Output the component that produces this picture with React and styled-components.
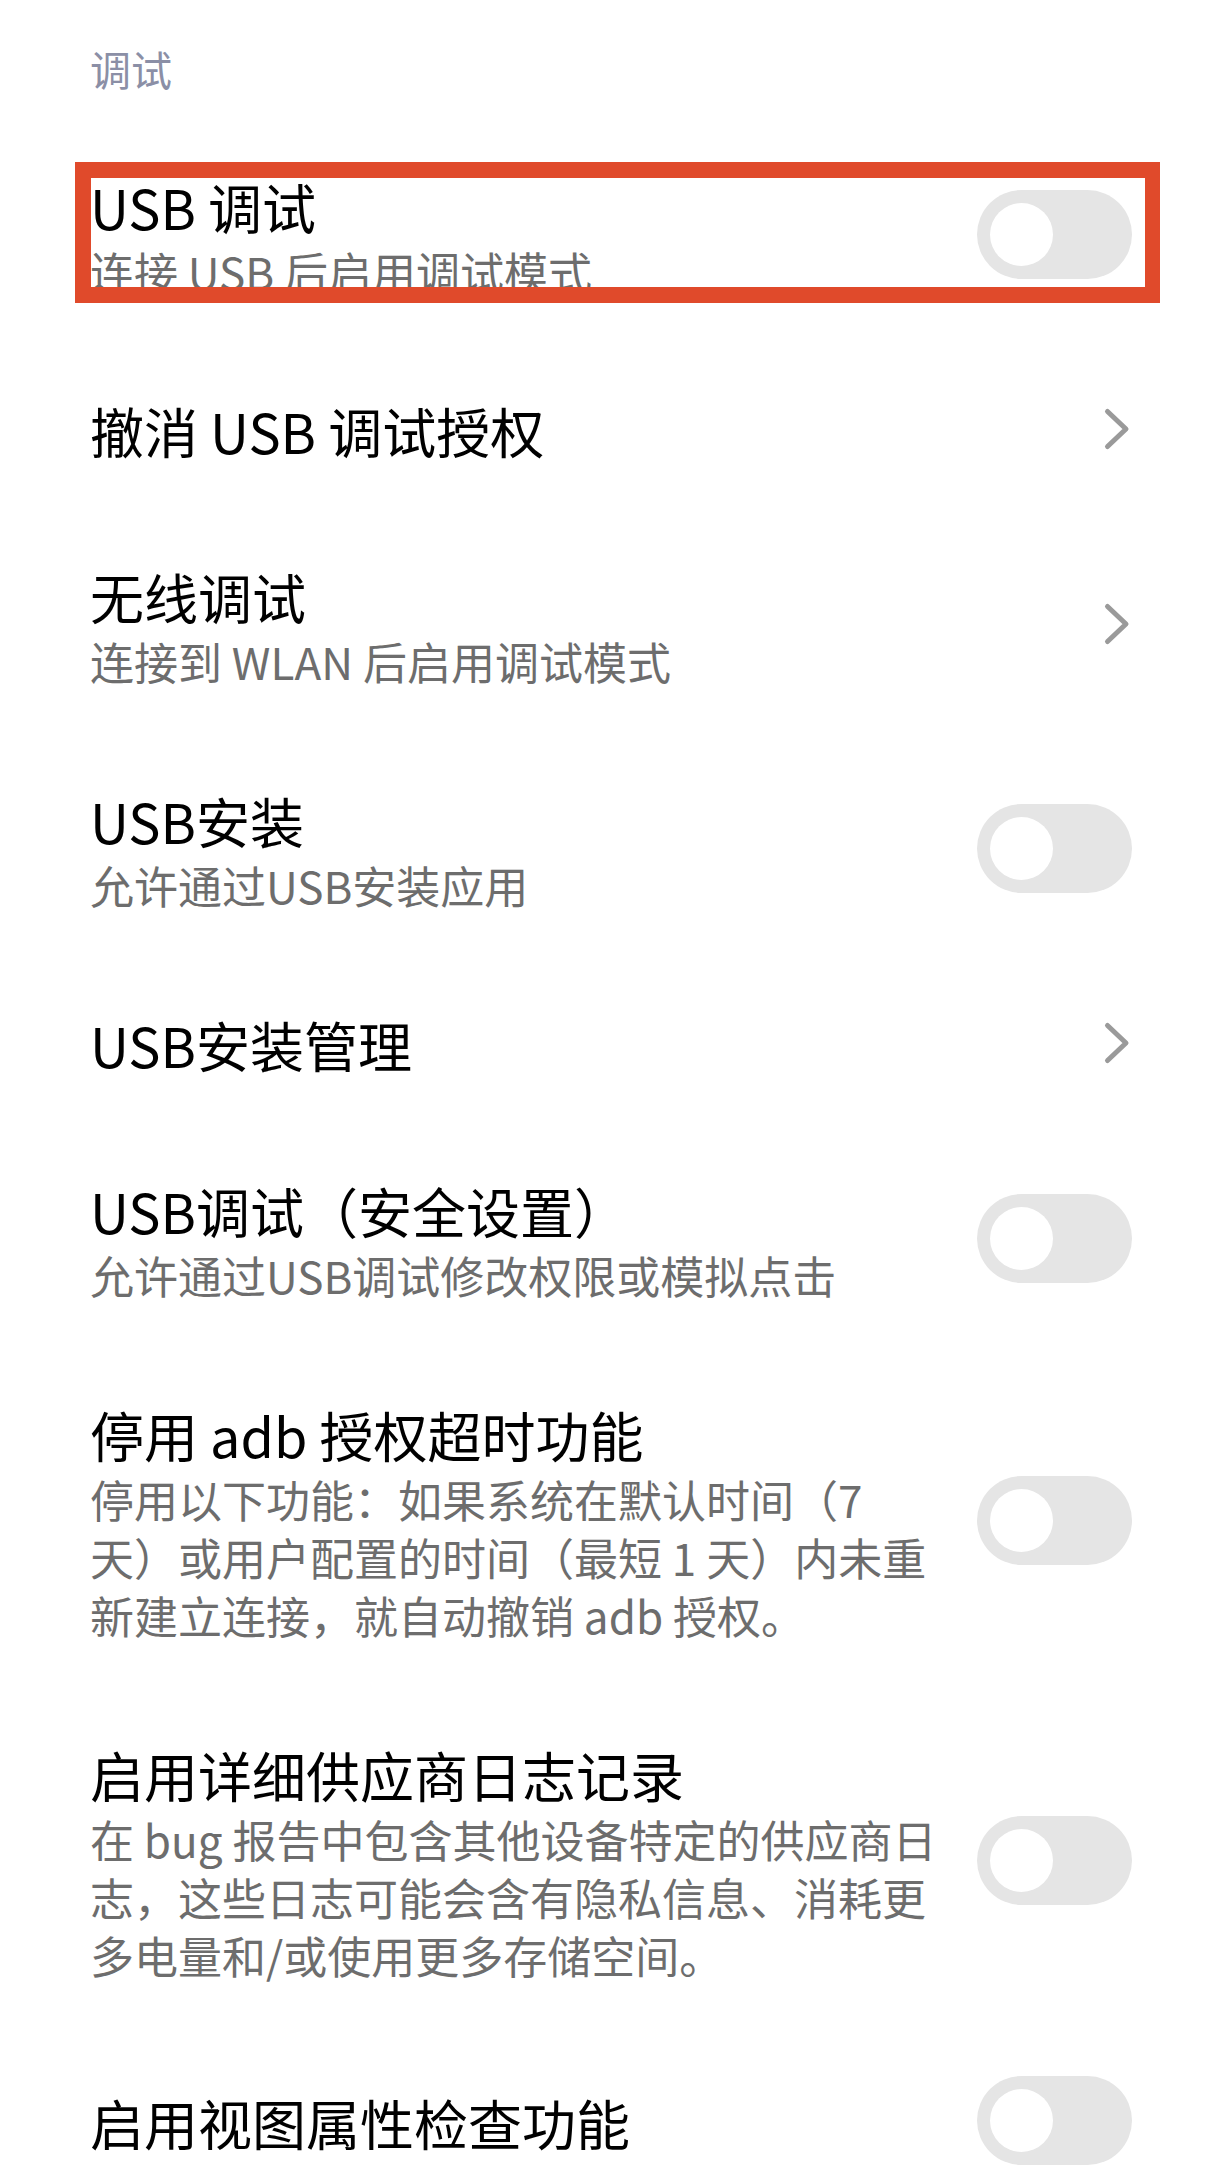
import React from 'react'
import styled, { createGlobalStyle } from 'styled-components'

const GlobalStyle = createGlobalStyle`
  html, body {
    margin: 0;
    padding: 0;
    background: #ffffff;
  }
  body {
    font-family: "Noto Sans CJK SC", "Noto Sans", sans-serif;
  }
`

const Page = styled.div`
  width: 1220px;
  min-height: 2168px;
  background: #ffffff;
`

const SectionTitle = styled.div`
  padding: 38px 0 24px 90px;
  font-size: 41px;
  line-height: 60px;
  color: #8b8fa6;
`

const Row = styled.div`
  position: relative;
  display: flex;
  align-items: center;
  padding: 46px 88px 46px 90px;
`

const TextBlock = styled.div`
  flex: 1;
  display: flex;
  flex-direction: column;
`

const Title = styled.div`
  padding-top: 3px;
  font-size: 54px;
  line-height: 71px;
  color: #000000;
  white-space: nowrap;
`

const Summary = styled.div`
  font-size: 44px;
  line-height: 58px;
  color: #6d6d6d;
  white-space: pre;
`

const Trailing = styled.div`
  width: 155px;
  display: flex;
  justify-content: flex-end;
  align-items: center;
  flex-shrink: 0;
`

const Track = styled.div`
  width: 155px;
  height: 89px;
  border-radius: 45px;
  background: ${props => (props.on ? '#0d84ff' : '#e5e5e5')};
  display: flex;
  align-items: center;
  justify-content: ${props => (props.on ? 'flex-end' : 'flex-start')};
  padding: 0 13px;
  box-sizing: border-box;
`

const Knob = styled.div`
  width: 63px;
  height: 63px;
  border-radius: 50%;
  background: #ffffff;
`

const Highlight = styled.div`
  position: absolute;
  top: 40px;
  left: 75px;
  right: 60px;
  bottom: 43px;
  border: 16px solid #e04a2b;
  border-right-width: 15px;
  pointer-events: none;
`

const Switch = ({ on }) => (
  <Track on={on ? 1 : 0}>
    <Knob />
  </Track>
)

const Chevron = () => (
  <svg width="30" height="46" viewBox="0 0 30 46">
    <polyline
      points="5.5,5.5 24,23 5.5,40.5"
      fill="none"
      stroke="#9a9a9a"
      strokeWidth="5"
      strokeLinecap="round"
      strokeLinejoin="round"
    />
  </svg>
)

const items = [
  { title: 'USB 调试', summary: '连接 USB 后启用调试模式', type: 'switch', marked: true },
  { title: '撤消 USB 调试授权', type: 'arrow' },
  { title: '无线调试', summary: '连接到 WLAN 后启用调试模式', type: 'arrow' },
  { title: 'USB安装', summary: '允许通过USB安装应用', type: 'switch' },
  { title: 'USB安装管理', type: 'arrow' },
  { title: 'USB调试（安全设置）', summary: '允许通过USB调试修改权限或模拟点击', type: 'switch' },
  {
    title: '停用 adb 授权超时功能',
    summary: '停用以下功能：如果系统在默认时间（7\n天）或用户配置的时间（最短 1 天）内未重\n新建立连接，就自动撤销 adb 授权。',
    type: 'switch'
  },
  {
    title: '启用详细供应商日志记录',
    summary: '在 bug 报告中包含其他设备特定的供应商日\n志，这些日志可能会含有隐私信息、消耗更\n多电量和/或使用更多存储空间。',
    type: 'switch'
  },
  { title: '启用视图属性检查功能', type: 'switch' }
]

const App = () => {
  return (
    <Page>
      <GlobalStyle />
      <SectionTitle>调试</SectionTitle>
      {items.map(item => (
        <Row key={item.title}>
          <TextBlock>
            <Title>{item.title}</Title>
            {item.summary && <Summary>{item.summary}</Summary>}
          </TextBlock>
          <Trailing>
            {item.type === 'switch' ? <Switch on={false} /> : <Chevron />}
          </Trailing>
          {item.marked && <Highlight />}
        </Row>
      ))}
    </Page>
  )
}

export default App
